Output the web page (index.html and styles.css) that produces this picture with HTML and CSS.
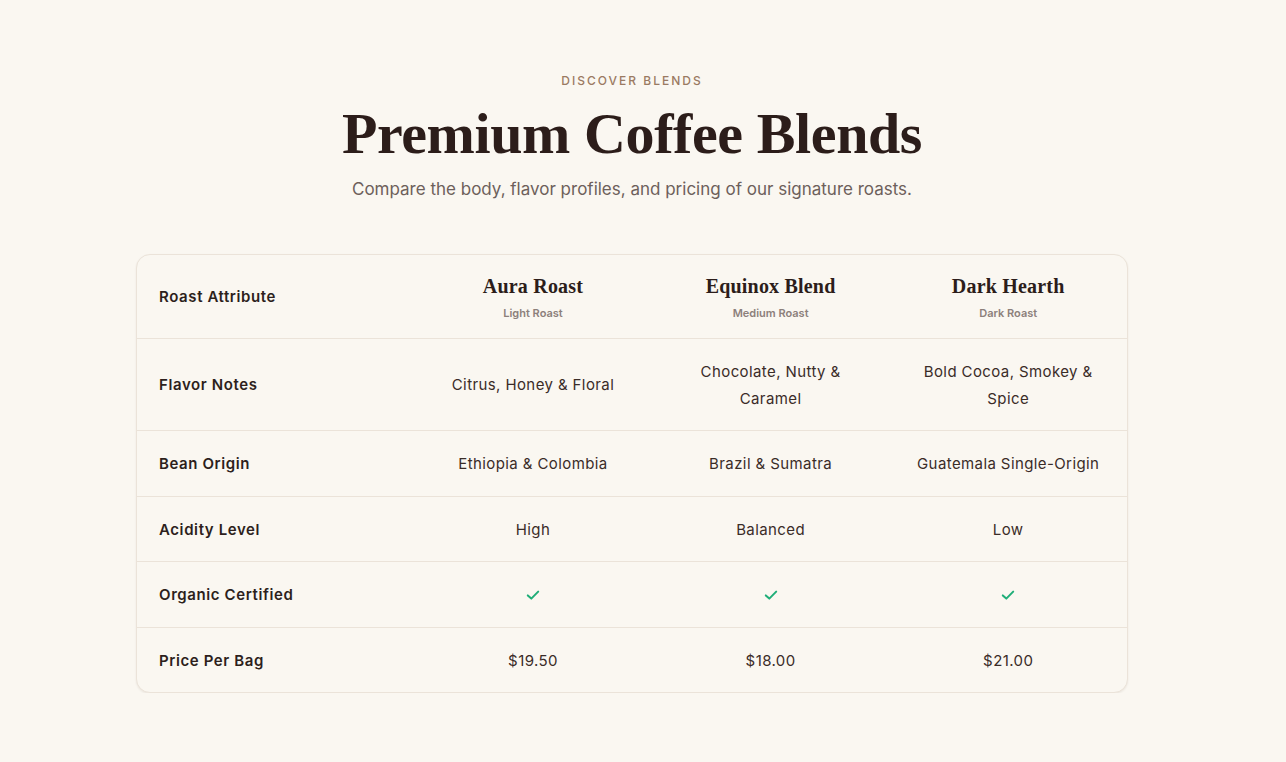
FILE: index.html
```html
<!DOCTYPE html>
<html lang="en">
<head>
<meta charset="utf-8">
<title>Premium Coffee Blends</title>
<link rel="stylesheet" href="styles.css">
</head>
<body>
<main class="page">
  <header class="intro">
    <p class="eyebrow">DISCOVER BLENDS</p>
    <h1 class="title">Premium Coffee Blends</h1>
    <p class="lead">Compare the body, flavor profiles, and pricing of our signature roasts.</p>
  </header>

  <div class="card">
    <table class="compare">
      <colgroup>
        <col class="col-attr">
        <col class="col-blend">
        <col class="col-blend">
        <col class="col-blend">
      </colgroup>
      <thead>
        <tr>
          <th class="attr">Roast Attribute</th>
          <th class="blend"><span class="blend-name">Aura Roast</span><span class="blend-type">Light Roast</span></th>
          <th class="blend"><span class="blend-name">Equinox Blend</span><span class="blend-type">Medium Roast</span></th>
          <th class="blend"><span class="blend-name">Dark Hearth</span><span class="blend-type">Dark Roast</span></th>
        </tr>
      </thead>
      <tbody>
        <tr>
          <th class="attr">Flavor Notes</th>
          <td>Citrus, Honey &amp; Floral</td>
          <td>Chocolate, Nutty &amp; Caramel</td>
          <td>Bold Cocoa, Smokey &amp; Spice</td>
        </tr>
        <tr>
          <th class="attr">Bean Origin</th>
          <td>Ethiopia &amp; Colombia</td>
          <td>Brazil &amp; Sumatra</td>
          <td>Guatemala Single-Origin</td>
        </tr>
        <tr>
          <th class="attr">Acidity Level</th>
          <td>High</td>
          <td>Balanced</td>
          <td>Low</td>
        </tr>
        <tr>
          <th class="attr">Organic Certified</th>
          <td><svg class="check" viewBox="0 0 16 16" width="16" height="16" aria-label="Yes"><path d="M2.8 8.4 L6.3 11.6 L13.2 4.6" fill="none" stroke="currentColor" stroke-width="2" stroke-linecap="round" stroke-linejoin="round"/></svg></td>
          <td><svg class="check" viewBox="0 0 16 16" width="16" height="16" aria-label="Yes"><path d="M2.8 8.4 L6.3 11.6 L13.2 4.6" fill="none" stroke="currentColor" stroke-width="2" stroke-linecap="round" stroke-linejoin="round"/></svg></td>
          <td><svg class="check" viewBox="0 0 16 16" width="16" height="16" aria-label="Yes"><path d="M2.8 8.4 L6.3 11.6 L13.2 4.6" fill="none" stroke="currentColor" stroke-width="2" stroke-linecap="round" stroke-linejoin="round"/></svg></td>
        </tr>
        <tr>
          <th class="attr">Price Per Bag</th>
          <td>$19.50</td>
          <td>$18.00</td>
          <td>$21.00</td>
        </tr>
      </tbody>
    </table>
  </div>
</main>
</body>
</html>
```

FILE: styles.css
```css
* { box-sizing: border-box; }

html, body {
  margin: 0;
  padding: 0;
  background: #faf7f1;
}

body {
  font-family: "Inter", "Lato", "Liberation Sans", sans-serif;
  color: #2d1f1c;
  padding-right: 22px;
}

.page {
  width: 992px;
  margin: 0 auto;
  padding-top: 73px;
}

.intro {
  text-align: center;
}

.eyebrow {
  margin: 0;
  font-size: 12px;
  font-weight: 500;
  letter-spacing: 2px;
  color: #9a7a62;
  line-height: 16px;
}

.title {
  margin: 12px 0 0;
  font-family: "Liberation Serif", "DejaVu Serif", serif;
  font-weight: 700;
  font-size: 58px;
  line-height: 66px;
  color: #2c1d1a;
  letter-spacing: -0.4px;
}

.lead {
  margin: 10px 0 0;
  font-size: 17px;
  line-height: 24px;
  color: #6d605b;
  font-weight: 400;
}

.card {
  margin-top: 53px;
  border: 1px solid #ebe3d9;
  border-radius: 14px;
  background: #faf7f1;
  box-shadow: 0 1px 2px rgba(60, 40, 20, 0.08);
  overflow: hidden;
}

.compare {
  width: 100%;
  border-collapse: collapse;
  table-layout: fixed;
}

.col-attr { width: 28%; }
.col-blend { width: 24%; }

.compare th,
.compare td {
  padding: 19px 22px 18.5px;
  font-size: 15px;
  line-height: 27px;
  vertical-align: middle;
  border-bottom: 1px solid #ebe3d9;
}

.compare tbody tr:last-child th,
.compare tbody tr:last-child td {
  border-bottom: none;
}

.compare td {
  text-align: center;
  color: #3a2c28;
  font-weight: 400;
  letter-spacing: 0.4px;
}

.compare .attr {
  text-align: left;
  font-weight: 600;
  color: #2d1f1c;
  letter-spacing: 0.6px;
}

.compare thead th {
  padding-top: 17px;
  padding-bottom: 16.5px;
}

.blend {
  text-align: center;
}

.blend-name {
  display: block;
  font-family: "Liberation Serif", "DejaVu Serif", serif;
  font-weight: 700;
  font-size: 20px;
  line-height: 28px;
  color: #2c1d1a;
  letter-spacing: 0.2px;
}

.blend-type {
  display: block;
  margin-top: 5px;
  font-size: 11px;
  line-height: 16px;
  font-weight: 600;
  color: #8c807b;
}

.check {
  display: block;
  margin: 0 auto;
  color: #1fae78;
}
```
